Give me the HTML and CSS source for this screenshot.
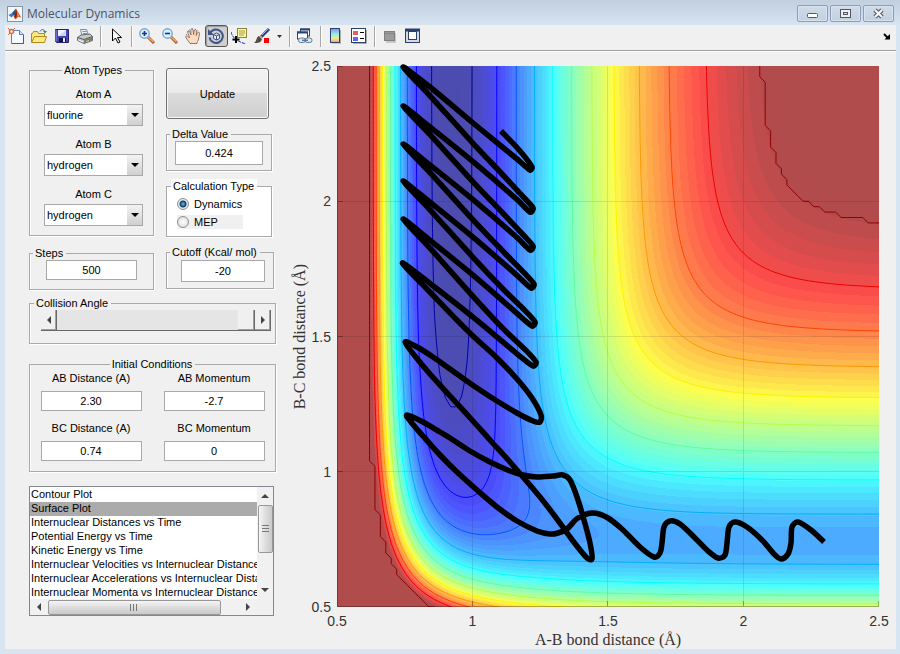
FILE: index.html
```
<!DOCTYPE html>
<html lang="en">
<head>
	<title>Molecular Dynamics</title>
	<meta charset="utf-8">
	<link rel="stylesheet" href="styles.css">
	<script src="plot.js" defer></script>
</head>
<body>
	<header class="titlebar">
		<svg class="logo" width="16" height="16" viewBox="0 0 16 16">
			<rect x=".5" y=".5" width="15" height="15" fill="#f4f6f8" stroke="#8296ab"/>
			<path d="M1.500 9 5 7l2 2-2.500 2.500z" fill="#3a7fc0"/>
			<path d="M5 7 9 2.500 8.500 8 7 10z" fill="#2b4f80"/>
			<path d="M9 2.500 11 6l3.500 6-3-1.500-3 3L6.500 11 8 8.500z" fill="#d9541e"/>
			<path d="M9 3 10 8 9 12 7.500 11z" fill="#7c1d10"/>
			<path d="M10 5 12 10 10.500 10z" fill="#f5a03a"/>
		</svg>
		<h1>Molecular Dynamics</h1>
		<div class="window-buttons">
			<button type="button" aria-label="Minimize">
				<svg width="13" height="11" viewBox="0 0 13 11"><rect x="1.500" y="5.500" width="10" height="4" rx="1" fill="#fff" stroke="#535666"/></svg>
			</button>
			<button type="button" aria-label="Restore">
				<svg width="13" height="11" viewBox="0 0 13 11"><rect x="1.500" y="1.500" width="10" height="8" fill="#eee" stroke="#535666"/><rect x="4.500" y="4.500" width="4" height="2" fill="#cdd" stroke="#535666"/></svg>
			</button>
			<button type="button" aria-label="Close">
				<svg width="13" height="11" viewBox="0 0 13 11"><path d="M3 2 10 9M10 2 3 9" stroke="#535666" stroke-width="4.500"/><path d="M3 2 10 9M10 2 3 9" stroke="#f4f4f4" stroke-width="2.300"/></svg>
			</button>
		</div>
	</header>

	<div class="window">
		<nav class="toolbar">
			<button type="button" aria-label="New"><svg width="16" height="16" viewBox="0 0 16 16">
				<path d="M3.500 2.500h8l4 4v9h-12z" fill="#f7fbff" stroke="#5c7fbf"/><path d="M11.500 2.500v4h4" fill="#cfe0f5" stroke="#5c7fbf"/><path d="M15.500 7v8.500H4" fill="none" stroke="#3a5a9a"/>
				<circle cx="3.500" cy="3.500" r="2" fill="#fff" stroke="#e2683c" stroke-width="1.500"/><path d="M0 0l2 2M7 0 5 2M0 7l2-2" stroke="#e2683c"/></svg></button>
			<button type="button" aria-label="Open"><svg width="16" height="16" viewBox="0 0 16 16">
				<path d="M.5 14.500v-9h1l1-2h4l1 2h6v3" fill="#fbe58a" stroke="#b08a1c"/><path d="M.5 14.500 3.500 8.500h12l-2 6z" fill="#ffe87c" stroke="#b08a1c"/>
				<path d="M9 3.500c1.500-2.500 4-2.500 5 0" fill="none" stroke="#2a6a9a"/><path d="M12 3h4l-2 2.500z" fill="#2a8a6a"/></svg></button>
			<button type="button" aria-label="Save"><svg width="16" height="16" viewBox="0 0 16 16">
				<path d="M1.500 1.500h13v13h-12l-1-1z" fill="#4347b4" stroke="#23236e"/><path d="M2 2v11" stroke="#8e93f0"/><rect x="4" y="2" width="8" height="6" fill="#eef3fb"/><path d="M5 8h7l0-6z" fill="#c7d6ec"/>
				<rect x="5" y="10" width="7" height="4" fill="#15153c"/><rect x="9" y="10" width="2" height="4" fill="#e6e6f2"/></svg></button>
			<button type="button" aria-label="Print"><svg width="16" height="16" viewBox="0 0 16 16">
				<path d="M5 8 3.500 1.500h6l2 5.500" fill="#e6effb" stroke="#7c8fa8"/><path d="M5.500 3.500h4M6 5.500h4" stroke="#6a92cc"/>
				<path d="M.5 9.500 4 7l9-1 2.500 2.500v4L7 15.500.5 12.500z" fill="#c5c8c9" stroke="#676b6d"/><path d="M.5 9.500 7 11.500l8.500-3" fill="none" stroke="#55585a"/><path d="M7 12v3.500l8.500-3.500V9z" fill="#76797a"/><path d="M1.500 12 6 14" stroke="#fff"/><path d="M9 13.500l3-1" stroke="#f0d840"/></svg></button>
			<span class="sep"></span>
			<button type="button" aria-label="Edit plot"><svg width="16" height="16" viewBox="0 0 16 16">
				<path d="M4.500 1v12l3-3 2.500 5 2-1-2.500-4.500h4z" fill="#fff" stroke="#000"/></svg></button>
			<span class="sep"></span>
			<button type="button" aria-label="Zoom in"><svg width="16" height="16" viewBox="0 0 16 16">
				<path d="M9 9l6 6" stroke="#a8552a" stroke-width="3"/><path d="M9 9l5.500 5" stroke="#f5b056" stroke-width="1.500"/><circle cx="5.500" cy="5.500" r="4.700" fill="#d5f1fc" stroke="#7aa4d8" stroke-width="1.400"/><path d="M3 5.500h5M5.500 3v5" stroke="#17358c" stroke-width="1.600"/></svg></button>
			<button type="button" aria-label="Zoom out"><svg width="16" height="16" viewBox="0 0 16 16">
				<path d="M9 9l6 6" stroke="#a8552a" stroke-width="3"/><path d="M9 9l5.500 5" stroke="#f5b056" stroke-width="1.500"/><circle cx="5.500" cy="5.500" r="4.700" fill="#d5f1fc" stroke="#7aa4d8" stroke-width="1.400"/><path d="M3 5.500h5" stroke="#17358c" stroke-width="1.600"/></svg></button>
			<button type="button" aria-label="Pan"><svg width="16" height="16" viewBox="0 0 16 16">
				<path d="M5 15.500C3 12 .5 10 .7 8.500 1.500 7 3.500 8.500 4.500 10 4 7 2 4 3 3c1.500-.8 2 1.500 3 4C5.800 4 5.300 1 6.800.7 8.300.7 8.300 4 8.600 6.500 9 4 9 1.500 10.500 1.500 12 2 11.300 5 11.200 7.500c.8-2 1.300-3.500 2.800-3.200C15.500 5 13.500 9 13.500 11c-.3 2-1.500 3-1.500 4.500z" fill="#fbdcc0" stroke="#7a5a48" stroke-width=".8"/><path d="M1 7 3 3 6 1l4 0 4 3" fill="none" stroke="#4870c0" stroke-dasharray="1 2"/></svg></button>
			<button type="button" class="pressed" aria-label="Rotate 3D"><svg width="16" height="16" viewBox="0 0 16 16">
				<path d="M2.500 4.500A6.700 6.700 0 1 1 1.500 9.500" fill="none" stroke="#3d5488" stroke-width="2"/><path d="M0 1v6h6z" fill="#3d5488"/><path d="M5.500 6.500 8.500 5l3 1.500v4l-3 1.500-3-1.500zM5.500 6.500l3 1.500 3-1.500M8.500 8v4" fill="#e2ecf8" stroke="#3d5488"/></svg></button>
			<button type="button" aria-label="Data cursor"><svg width="16" height="16" viewBox="0 0 16 16">
				<path d="M0 4c1 4 4 9 15 12" fill="none" stroke="#1818e0" stroke-dasharray="3 1"/><rect x="6.500" y=".5" width="9" height="9" fill="#fbf6a0" stroke="#8d8535"/><path d="M8 3h6M8 5h6M8 7h5" stroke="#a39b58"/><path d="M5 8v7M1.500 11.500h7" stroke="#000" stroke-width="2"/></svg></button>
			<button type="button" aria-label="Brush"><svg width="16" height="16" viewBox="0 0 16 16">
				<path d="M15 1 7 9" stroke="#2c3d80" stroke-width="3"/><path d="M15 0 8 7" stroke="#9ab4e8"/><path d="M5 8l3 3c-1 4-4 4-8 4 3-2 2-6 5-7z" fill="#514a45"/><path d="M6 8 8 10" stroke="#c8a070" stroke-width="2"/><rect x="10" y="10" width="5" height="5" fill="#f00"/></svg></button>
			<button type="button" class="drop" aria-label="Brush colors"><svg width="5" height="3" viewBox="0 0 5 3"><path d="M0 0h5L2.500 3z" fill="#333"/></svg></button>
			<span class="sep"></span>
			<button type="button" aria-label="Link plot"><svg width="16" height="16" viewBox="0 0 16 16">
				<rect x="3.500" y="1" width="9" height="7" fill="#fff" stroke="#28427c"/><path d="M3 1.500h10" stroke="#28427c" stroke-width="2"/><rect x=".5" y="4" width="10" height="7" fill="#fff" stroke="#28427c"/><path d="M0 4.500h11" stroke="#28427c" stroke-width="2"/>
				<rect x="1.500" y="10" width="7" height="4.500" rx="2.200" fill="#dfe9f2" stroke="#5b7894"/><rect x="8" y="10" width="7" height="4.500" rx="2.200" fill="#dfe9f2" stroke="#5b7894"/><path d="M5 12.300h6" stroke="#5b7894" stroke-width="1.500"/></svg></button>
			<span class="sep"></span>
			<button type="button" aria-label="Insert colorbar"><svg width="16" height="16" viewBox="0 0 16 16">
				<defs><linearGradient id="cb" x2="0" y2="1"><stop offset="0" stop-color="#8d8cf0"/><stop offset=".4" stop-color="#8ff0e8"/><stop offset=".7" stop-color="#f7e98c"/><stop offset="1" stop-color="#f59a90"/></linearGradient></defs>
				<path d="M12.500 2v14H4" fill="none" stroke="#aaa"/><rect x="2.500" y=".5" width="9" height="14" fill="url(#cb)" stroke="#27406f"/></svg></button>
			<button type="button" aria-label="Insert legend"><svg width="16" height="16" viewBox="0 0 16 16">
				<path d="M15.500 2v13.500H2" fill="none" stroke="#aaa"/><rect x=".5" y=".5" width="14" height="14" fill="#fff" stroke="#27406f"/><rect x="2" y="3" width="5" height="4" fill="#e35d5d"/><rect x="2" y="9" width="5" height="4" fill="#6464e4"/><path d="M9 4.500h4M9 10.500h4" stroke="#000"/></svg></button>
			<span class="sep"></span>
			<button type="button" aria-label="Hide plot tools"><svg width="16" height="16" viewBox="0 0 16 16">
				<path d="M13 5v9H4" fill="none" stroke="#bbb" stroke-width="1.500"/><rect x="2.500" y="3.500" width="10" height="9" fill="#9b9b9b" stroke="#808080"/><path d="M3 5.500h9" stroke="#858585"/></svg></button>
			<button type="button" aria-label="Show plot tools"><svg width="16" height="16" viewBox="0 0 16 16">
				<rect x=".5" y="1.500" width="14" height="13" fill="#d9d9d9" stroke="#27406f"/><path d="M0 2h15" stroke="#27406f" stroke-width="3"/><rect x="3.500" y="3.500" width="8" height="8" fill="#fff" stroke="#27406f"/></svg></button>
			<button type="button" class="dock" aria-label="Dock figure"><svg width="8" height="7" viewBox="0 0 8 7">
				<path d="M1 1 5 5" stroke="#000" stroke-width="2"/><path d="M7 1v5.500H1.500L3.500 4.500z" fill="#000"/></svg></button>
		</nav>

		<main>
			<form class="controls">
				<div class="columns">
					<div class="column left">
						<fieldset class="atoms">
							<legend>Atom Types</legend>
							<label for="atomA">Atom A</label>
							<div class="combo"><select id="atomA"><option>fluorine</option><option>hydrogen</option></select></div>
							<label for="atomB">Atom B</label>
							<div class="combo"><select id="atomB"><option>hydrogen</option><option>fluorine</option></select></div>
							<label for="atomC">Atom C</label>
							<div class="combo"><select id="atomC"><option>hydrogen</option><option>fluorine</option></select></div>
						</fieldset>
						<fieldset class="single steps">
							<legend>Steps</legend>
							<div class="box"><input type="text" aria-label="Steps" value="500"></div>
						</fieldset>
					</div>
					<div class="column right">
						<button type="button" class="update">Update</button>
						<fieldset class="single">
							<legend>Delta Value</legend>
							<div class="box"><input type="text" class="tall" aria-label="Delta Value" value="0.424"></div>
						</fieldset>
						<fieldset class="calc">
							<legend>Calculation Type</legend>
							<label><input type="radio" name="calc" checked>Dynamics</label>
							<label class="off"><input type="radio" name="calc">MEP</label>
						</fieldset>
						<fieldset class="single cutoff">
							<legend>Cutoff (Kcal/ mol)</legend>
							<div class="box"><input type="text" aria-label="Cutoff (Kcal/ mol)" value="-20"></div>
						</fieldset>
					</div>
				</div>

				<fieldset class="angle">
					<legend>Collision Angle</legend>
					<div class="slider">
						<button type="button" aria-label="Decrease angle"><i class="tri tri-left"></i></button>
						<input type="range" aria-label="Collision Angle" min="0" max="180" value="180">
						<button type="button" aria-label="Increase angle"><i class="tri tri-right"></i></button>
					</div>
				</fieldset>

				<fieldset class="initial">
					<legend>Initial Conditions</legend>
					<div class="field"><label for="abd">AB Distance (A)</label><input type="text" id="abd" value="2.30"></div>
					<div class="field"><label for="abm">AB Momentum</label><input type="text" id="abm" value="-2.7"></div>
					<div class="field"><label for="bcd">BC Distance (A)</label><input type="text" id="bcd" value="0.74"></div>
					<div class="field"><label for="bcm">BC Momentum</label><input type="text" id="bcm" value="0"></div>
				</fieldset>

				<div class="listbox">
					<select size="8" aria-label="Plot type">
						<option>Contour Plot</option>
						<option selected>Surface Plot</option>
						<option>Internuclear Distances vs Time</option>
						<option>Potential Energy vs Time</option>
						<option>Kinetic Energy vs Time</option>
						<option>Internuclear Velocities vs Internuclear Distance</option>
						<option>Internuclear Accelerations vs Internuclear Distance</option>
						<option>Internuclear Momenta vs Internuclear Distance</option>
					</select>
					<div class="scroll vertical">
						<i class="tri tri-up"></i><span class="thumb"></span><i class="tri tri-down"></i>
					</div>
					<div class="scroll horizontal">
						<i class="tri tri-left"></i><span class="thumb"></span><i class="tri tri-right"></i>
					</div>
				</div>
			</form>

			<section class="figure">
				<div class="ylabel"><span>B-C bond distance (Å)</span></div>
				<ul class="ticks yticks"><li>2.5</li><li>2</li><li>1.5</li><li>1</li><li>0.5</li></ul>
				<div class="plot">
					<canvas id="surface" width="542" height="541"></canvas>
					<svg class="overlay" viewBox="337 66 542 541" preserveAspectRatio="none">
						<g class="grid">
							<path d="M472.500 66v541M607.500 66v541M743.500 66v541M337 201.500h542M337 336.500h542M337 471.500h542"/>
						</g>
						<g class="axis">
							<path d="M337.500 66v541M337 606.500h542"/>
							<path d="M338 66.500h5M338 201.500h5M338 336.500h5M338 471.500h5M472.500 606v-5M607.500 606v-5M743.500 606v-5M878.500 606v-5"/>
						</g>
						<path id="trajectory" class="trajectory"/>
					</svg>
				</div>
				<ul class="ticks xticks"><li>0.5</li><li>1</li><li>1.5</li><li>2</li><li>2.5</li></ul>
				<div class="xlabel">A-B bond distance (Å)</div>
			</section>
		</main>
	</div>
</body>
</html>
```
FILE: styles.css
```
:root{
	--face: #f0f0f0;
	--frame: #d7e4f2;
	--line: #a9a9a9;
}
*{
	margin: 0;
	padding: 0;
	box-sizing: border-box;
}
body{
	min-height: 100vh;
	display: flex;
	flex-direction: column;
	padding: 0 4px 5px 5px;
	background: var(--frame);
	font: 11px/14px "Liberation Sans", Arial, sans-serif;
	color: #000;
}
button, input, select{
	font: inherit;
	color: inherit;
}
ul{
	list-style: none;
}

/* title bar */
.titlebar{
	display: flex;
	align-items: center;
	gap: 4px;
	height: 25px;
	margin: 0 -4px 0 -5px;
	padding: 2px 6px 0 7px;
	background: linear-gradient(#c1cfde, var(--frame));
}
.titlebar h1{
	flex: 1;
	font: 12px/16px "Open Sans", "Noto Sans", sans-serif;
	color: #4b5563;
}
.window-buttons{
	display: flex;
	gap: 2px;
}
.window-buttons button{
	width: 31px;
	height: 17px;
	display: flex;
	align-items: center;
	justify-content: center;
	background: linear-gradient(#cfdbe8, #c2d0e0);
	border: 1px solid #8b9bb8;
	border-radius: 2px;
	box-shadow: inset 0 0 0 1px #d9e4f0;
}

.window{
	flex: 1;
	display: flex;
	flex-direction: column;
	background: var(--face);
}

/* toolbar */
.toolbar{
	display: flex;
	align-items: center;
	height: 26px;
	padding-bottom: 3px;
	border-bottom: 1px solid #a0a0a0;
	box-shadow: 0 1px #fff;
}
.toolbar button{
	width: 23px;
	height: 22px;
	display: flex;
	align-items: center;
	padding-left: 3px;
	background: none;
	border: none;
}
.toolbar svg{
	fill: none;
}
.toolbar .pressed{
	padding-left: 2px;
	background: #cfcfcf;
	border: 1px solid #555;
	border-radius: 3px;
	box-shadow: inset 1px 1px 1px #999;
}
.toolbar .drop{
	width: 12px;
}
.toolbar .dock{
	margin-left: auto;
	padding-left: 10px;
}
.sep{
	width: 2px;
	height: 21px;
	margin: 0 3px;
	background: #a6a6a6;
	border-right: 1px solid #fff;
}

main{
	flex: 1;
	display: flex;
	gap: 14px;
	padding-left: 24px;
}

/* left hand controls */
.controls{
	width: 247px;
	padding-top: 12px;
}
.columns{
	display: flex;
	gap: 12px;
}
.column{
	display: flex;
	flex-direction: column;
}
.left{
	width: 125px;
	gap: 10px;
}
.right{
	width: 106px;
	gap: 8px;
	padding-top: 5px;
}
fieldset{
	min-width: 0;
	border: 1px solid var(--line);
	box-shadow: 1px 1px #fff, inset 1px 0 #fff;
}
legend{
	margin-left: 4px;
	padding: 0 3px 0 2px;
}
.atoms legend, .initial legend{
	margin: 0 auto;
}
input[type=text]{
	border: 1px solid var(--line);
	background: #fff;
	text-align: center;
	height: 20px;
}
.atoms{
	height: 173px;
	display: flex;
	flex-direction: column;
	align-items: center;
	padding: 10px 0 0 4px;
}
.atoms .combo{
	margin: 3px 0 11px;
}
.combo{
	position: relative;
}
.combo select{
	display: block;
	width: 99px;
	height: 22px;
	padding: 0 2px;
	appearance: none;
	border: 1px solid var(--line);
	border-radius: 0;
	background: linear-gradient(#f3f3f3, #d0d0d0) right / 15px 100% no-repeat #fff;
}
.combo::after{
	content: "";
	position: absolute;
	right: 4px;
	top: 9px;
	border: 4px solid transparent;
	border-top-color: #000;
	border-bottom: none;
	pointer-events: none;
}
.single{
	height: 44px;
}
.single legend{
	margin-left: 3px;
}
.box{
	padding: 0 8px;
}
.box input{
	display: block;
	width: 100%;
}
.box .tall{
	height: 24px;
}
.steps .box{
	padding: 0 16px;
}
.cutoff{
	width: 108px;
}
.cutoff .box{
	padding: 1px 8px 0 14px;
}
.cutoff input{
	height: 22px;
}
.cutoff legend{
	white-space: nowrap;
}
.update{
	width: 103px;
	height: 51px;
	border: 1px solid #707070;
	border-radius: 3px;
	background: linear-gradient(#f2f2f2 0, #ebebeb 48%, #dcdcdc 50%, #cfcfcf);
	box-shadow: inset 0 0 0 1px #f8f8f8;
}
.calc{
	height: 58px;
	padding-top: 4px;
	background: #fff;
}
.calc legend{
	background: #fff;
	white-space: nowrap;
}
.calc label{
	display: flex;
	align-items: center;
	gap: 5px;
	width: 66px;
	height: 14px;
	margin: 0 0 4px 10px;
}
.calc .off{
	background: var(--face);
}
.calc input{
	appearance: none;
	width: 12px;
	height: 12px;
	border: 1px solid #8e8f8f;
	border-radius: 50%;
	background: radial-gradient(#fff, #d5d5d5);
}
.calc input:checked{
	background: radial-gradient(#5bc0e8 0, #103b63 3px, #e8e8e8 4px);
}

.angle{
	height: 48px;
	margin-top: 6px;
}
.slider{
	display: flex;
	height: 21px;
	margin: 0 4px 0 11px;
	background: #e5e5e5;
	border-bottom: 1px solid #696969;
}
.slider button{
	display: flex;
	align-items: center;
	justify-content: center;
	width: 16px;
	background: var(--face);
	border: none;
	border-right: 1px solid #696969;
	box-shadow: inset -1px -1px #a0a0a0;
}
.slider input{
	flex: 1;
	min-width: 0;
	appearance: none;
	background: none;
}
.slider input::-webkit-slider-thumb{
	appearance: none;
	width: 17px;
	height: 20px;
	background: var(--face);
	border-right: 1px solid #696969;
	box-shadow: inset -1px -1px #a0a0a0;
}

.initial{
	display: grid;
	grid-template-columns: 101px 101px;
	justify-content: center;
	align-content: start;
	column-gap: 22px;
	row-gap: 10px;
	height: 115px;
	margin-top: 13px;
}
.field{
	display: flex;
	flex-direction: column;
	gap: 6px;
	text-align: center;
}

/* list of plots with its scroll bars */
.listbox{
	display: grid;
	grid-template: 112px 16px / 1fr 16px;
	width: 245px;
	margin-top: 14px;
	border: 1px solid #828790;
}
.listbox select{
	appearance: none;
	min-width: 0;
	width: 100%;
	height: 112px;
	padding-top: 1px;
	border: none;
	border-radius: 0;
	background: #fff;
	overflow: hidden;
}
.listbox option{
	min-height: 14px;
	height: 14px;
	padding: 0 1px;
	line-height: 14px;
}
.listbox option:checked{
	color: #000;
	background: linear-gradient(#ababab, #ababab);
}
.scroll{
	display: flex;
	align-items: center;
	background: #f1f1f1;
}
.vertical{
	flex-direction: column;
	padding: 7px 0;
}
.horizontal{
	padding: 0 7px;
}
.thumb{
	display: block;
	border: 1px solid #989898;
	border-radius: 2px;
}
.vertical .thumb{
	width: 15px;
	height: 48px;
	margin: 7px 0 auto;
	background:
		repeating-linear-gradient(#777 0 1px, transparent 1px 3px) center / 7px 9px no-repeat,
		linear-gradient(90deg, #f5f5f5, #ddd 50%, #cacaca);
}
.horizontal .thumb{
	width: 173px;
	height: 15px;
	margin: 0 auto 0 7px;
	background:
		repeating-linear-gradient(90deg, #777 0 1px, transparent 1px 3px) center / 9px 7px no-repeat,
		linear-gradient(#f5f5f5, #ddd 50%, #cacaca);
}
.tri{
	border: 4px solid transparent;
}
.tri-up{
	border-top: none;
	border-bottom-color: #444;
}
.tri-down{
	border-bottom: none;
	border-top-color: #444;
}
.tri-left{
	border-left: none;
	border-right-color: #444;
}
.tri-right{
	border-right: none;
	border-left-color: #444;
}

/* figure */
.figure{
	flex: 1;
	display: grid;
	grid-template: 1fr 24px 18px / 20px 27px 1fr;
	padding: 15px 17px 0 0;
	color: #333;
}
.ylabel{
	display: flex;
	align-items: center;
	justify-content: center;
}
.ylabel span{
	writing-mode: vertical-rl;
	transform: rotate(180deg);
}
.ylabel, .xlabel{
	font: 16px/18px "Liberation Serif", serif;
}
.ticks{
	display: flex;
	justify-content: space-between;
	font-size: 14px;
}
.yticks{
	flex-direction: column;
	padding-right: 6px;
}
.ticks li{
	display: flex;
	align-items: center;
}
.yticks li{
	height: 0;
	justify-content: flex-end;
}
.xticks{
	grid-column: 3;
	padding-top: 4px;
}
.xticks li{
	width: 0;
	justify-content: center;
}
.xlabel{
	grid-column: 3;
	text-align: center;
}
.plot{
	position: relative;
}
.plot canvas, .overlay{
	position: absolute;
	inset: 0;
	width: 100%;
	height: 100%;
}
.overlay{
	overflow: visible;
	fill: none;
}
.grid, .axis{
	stroke: #000;
	stroke-opacity: .1;
	shape-rendering: crispEdges;
}
.axis{
	stroke-opacity: .3;
}
.trajectory{
	stroke: #000;
	stroke-width: 5.5;
	stroke-linejoin: round;
}
```
FILE: plot.js
```
// LEPS potential energy surface for F + H2, kcal/mol and angstrom
const HF = { D: 141.2, beta: 2.2187, re: 0.917 };
const HH = { D: 109.5, beta: 1.942, re: 0.7419 };
const delta = 0.435;
const mix = (1 - delta * delta) / (1 + delta * delta);
const vMin = -142;
const vMax = -20;

function pair(p, r) {
	let a = Math.exp(-p.beta * (r - p.re));
	let bound = p.D * (a * a - 2 * a);
	let anti = p.D / 2 * (a * a + 2 * a) * mix;
	return [(bound + anti) / 2, (bound - anti) / 2];
}

function potential(ab, bc) {
	let [q1, j1] = pair(HF, ab);
	let [q2, j2] = pair(HH, bc);
	let [q3, j3] = pair(HF, ab + bc);
	let s = (j1 - j2) ** 2 + (j2 - j3) ** 2 + (j3 - j1) ** 2;
	return q1 + q2 + q3 - Math.sqrt(s / 2);
}

function jet(t) {
	let ch = c => Math.max(0, Math.min(1, 1.5 - Math.abs(4 * t - c)));
	return [Math.max(ch(3), t > 0.9 ? 0.56 : 0), ch(2), Math.max(ch(1), t < 0.1 ? 0.56 : 0)].map(v => v * 255);
}

const canvas = document.getElementById('surface');
const ctx = canvas.getContext('2d');
const W = canvas.width;
const H = canvas.height;

function fillBands() {
	let img = ctx.createImageData(W, H);
	for (let y = 0; y < H; y++) {
		for (let x = 0; x < W; x++) {
			let v = potential(0.5 + 2 * x / W, 2.5 - 2 * y / H);
			let t = Math.min(1, Math.max(0, (v - vMin) / (vMax - vMin)));
			let c = jet(Math.floor(t * 58) / 58);
			let i = (y * W + x) * 4;
			for (let k = 0; k < 3; k++) img.data[i + k] = c[k] * 0.7 + 76;
			img.data[i + 3] = 255;
		}
	}
	ctx.putImageData(img, 0, 0);
}

// marching squares on a 0.02 grid
function contour(f, level, color) {
	const n = 100;
	let px = i => i * W / n;
	let py = j => H - j * H / n;
	let g = [];
	for (let i = 0; i <= n; i++) {
		g.push([]);
		for (let j = 0; j <= n; j++) g[i].push(f(0.5 + i / 50, 0.5 + j / 50));
	}
	ctx.beginPath();
	for (let i = 0; i < n; i++) {
		for (let j = 0; j < n; j++) {
			let c = [[i, j], [i + 1, j], [i + 1, j + 1], [i, j + 1]];
			let hits = [];
			for (let k = 0; k < 4; k++) {
				let [a, b] = c[k], [d, e] = c[(k + 1) % 4];
				let v = g[a][b], w = g[d][e];
				if ((v < level) === (w < level)) continue;
				let t = (level - v) / (w - v);
				hits.push([px(a + (d - a) * t), py(b + (e - b) * t)]);
			}
			for (let k = 0; k + 1 < hits.length; k += 2) {
				ctx.moveTo(...hits[k]);
				ctx.lineTo(...hits[k + 1]);
			}
		}
	}
	ctx.strokeStyle = color;
	ctx.lineWidth = 1;
	ctx.stroke();
}

fillBands();
for (let i = 0; i < 11; i++) {
	let level = -137.3 + i * 10.45;
	let c = jet((level - vMin) / (vMax - vMin));
	contour(potential, level, `rgb(${c.join()})`);
}
contour((a, b) => potential(a, b) > -22.2 ? 1 : 0, 0.999, '#8f0000');

const track = [
	[824,542],[811,530],[798,522],[792,527],[791,543],[788,554],[781,559],[774,554],[762,540],[747,527],[735,522],[729,527],[727,543],
	[725,555],[718,558],[708,551],[695,538],[680,524],[670,521],[664,527],[662,543],[660,553],[654,557],[640,547],[623,530],[608,518],[593,513],
	[578,518],[567,529],[558,533],[550,534],[537,531],[517,521],[497,507],[477,490],[457,472],[440,455],[423,436],[411,422],
	[407,415],[423,422],[440,432],[450,438],[470,451],[490,462],[510,471],[523,475],[537,477],[553,476],[563,475],[570,480],
	[577,497],[584,520],[590,543],[592,559],[587,558],[573,541],[557,519],[540,497],[523,477],[510,462],[490,440],[473,421],
	[450,396],[430,374],[415,356],[405,342],[417,347],[433,357],[457,374],[477,388],[497,401],[517,413],[533,421],[540,422],
	[541,415],[532,398],[517,379],[497,358],[473,336],[450,313],[427,289],[413,275],[403,263]
];
// [turning point on the right, turning point on the left]
const swings = [[536,365,219],[535,325,181],[534,287,144],[533,249,106],[533,211,67]];
let lastLeft = 263;
for (let [rx, ry, ly] of swings) {
	let up = ry - lastLeft;
	let down = ry - ly;
	track.push([430, lastLeft + up * 0.2], [473, lastLeft + up * 0.53], [517, lastLeft + up * 0.89], [rx - 3, ry + 1], [rx, ry - 3],
		[rx - 10, ry - down * 0.1], [503, ry - down * 0.25], [473, ry - down * 0.47], [430, ry - down * 0.8], [403, ly]);
	lastLeft = ly;
}
track.push([430, 87], [473, 123], [517, 159], [530, 170], [532, 167], [520, 151], [501, 131]);

function smooth(p) {
	let d = `M${p[0]}`;
	for (let i = 0; i < p.length - 1; i++) {
		let a = p[i - 1] || p[i], b = p[i], c = p[i + 1], e = p[i + 2] || c;
		// keep the handles short where the points lie close together
		let len = Math.hypot(c[0] - b[0], c[1] - b[1]);
		let h1 = Math.min(1 / 6, len / 3 / (Math.hypot(c[0] - a[0], c[1] - a[1]) || 1));
		let h2 = Math.min(1 / 6, len / 3 / (Math.hypot(e[0] - b[0], e[1] - b[1]) || 1));
		d += `C${b[0] + (c[0] - a[0]) * h1},${b[1] + (c[1] - a[1]) * h1} ${c[0] - (e[0] - b[0]) * h2},${c[1] - (e[1] - b[1]) * h2} ${c}`;
	}
	return d;
}
document.getElementById('trajectory').setAttribute('d', smooth(track));
```
